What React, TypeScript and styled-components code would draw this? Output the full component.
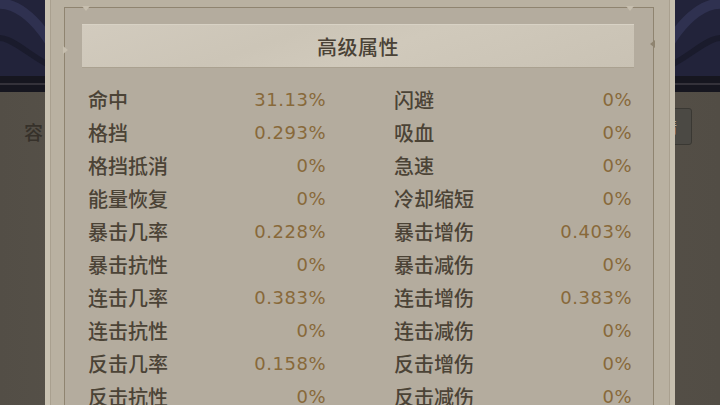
import styled, { createGlobalStyle } from "styled-components"

const GlobalStyle = createGlobalStyle`
  html, body {
    margin: 0;
    padding: 0;
    background: #1f1f2c;
    overflow: hidden;
  }
  * { box-sizing: border-box; }
`

interface Stat {
  label: string
  value: string
}

const stats: Stat[] = [
  { label: "命中", value: "31.13%" },
  { label: "闪避", value: "0%" },
  { label: "格挡", value: "0.293%" },
  { label: "吸血", value: "0%" },
  { label: "格挡抵消", value: "0%" },
  { label: "急速", value: "0%" },
  { label: "能量恢复", value: "0%" },
  { label: "冷却缩短", value: "0%" },
  { label: "暴击几率", value: "0.228%" },
  { label: "暴击增伤", value: "0.403%" },
  { label: "暴击抗性", value: "0%" },
  { label: "暴击减伤", value: "0%" },
  { label: "连击几率", value: "0.383%" },
  { label: "连击增伤", value: "0.383%" },
  { label: "连击抗性", value: "0%" },
  { label: "连击减伤", value: "0%" },
  { label: "反击几率", value: "0.158%" },
  { label: "反击增伤", value: "0%" },
  { label: "反击抗性", value: "0%" },
  { label: "反击减伤", value: "0%" },
]

const SceneTop = () => (
  <svg width="720" height="92" viewBox="0 0 720 92">
    <rect width="720" height="92" fill="#22233a" />
    <path d="M-20 10 C 10 -10, 40 20, 60 60" stroke="#2f3150" strokeWidth="10" fill="none" />
    <path d="M-10 40 C 10 30, 30 60, 60 70" stroke="#1a1b2c" strokeWidth="6" fill="none" />
    <path d="M740 10 C 710 -10, 680 20, 660 60" stroke="#2f3150" strokeWidth="10" fill="none" />
    <path d="M730 40 C 710 30, 690 60, 660 70" stroke="#1a1b2c" strokeWidth="6" fill="none" />
    <path d="M0 76 L 720 76 L 720 92 L 0 92 Z" fill="#16161f" />
    <path d="M0 84 L 720 84" stroke="#34323a" strokeWidth="2" />
  </svg>
)

export default function App() {
  return (
    <>
      <GlobalStyle />
      <Stage>
        <Scene>
          <SceneTop />
          <SceneBoard>
            <SceneLabel>容量</SceneLabel>
            <SceneButton>详情</SceneButton>
          </SceneBoard>
        </Scene>

        <Modal>
          <Frame>
            <NotchTop $side="left" />
            <NotchTop $side="right" />
            <NotchSide $side="left" />
            <NotchSide $side="right" />
            <Header>
              <Title>高级属性</Title>
            </Header>
            <StatGrid>
              {stats.map((s) => (
                <StatRow key={s.label}>
                  <Label>{s.label}</Label>
                  <Value>{s.value}</Value>
                </StatRow>
              ))}
            </StatGrid>
          </Frame>
        </Modal>
      </Stage>
    </>
  )
}

const Stage = styled.div`
  position: relative;
  width: 720px;
  height: 405px;
  overflow: hidden;
  font-family: "Noto Sans CJK SC", "Noto Sans", sans-serif;
`
const Scene = styled.div`
  display: flex;
  flex-direction: column;
  width: 720px;
  height: 405px;
  background: #22233a;
  svg {
    display: block;
  }
`
const SceneBoard = styled.div`
  flex: 1;
  display: flex;
  justify-content: space-between;
  align-items: flex-start;
  padding: 16px 28px 0 24px;
  background: linear-gradient(90deg, #534e46 0%, #5a554c 30%, #58524a 70%, #524d45 100%);
`
const SceneLabel = styled.div`
  margin-top: 10px;
  font-size: 19px;
  font-weight: 500;
  color: #36312a;
  letter-spacing: 2px;
`
const SceneButton = styled.div`
  width: 56px;
  height: 37px;
  display: flex;
  align-items: center;
  justify-content: flex-end;
  padding-right: 14px;
  border: 1px solid #3a3833;
  border-radius: 3px;
  background: #4b4944;
  color: #c9c3b6;
  font-size: 15px;
`
const Modal = styled.div`
  position: absolute;
  left: 45px;
  top: 0;
  width: 630px;
  height: 440px;
  padding: 7px 16px 0 14px;
  background: #b9b1a1;
  border-left: 5px solid #c8c1b1;
  border-right: 5px solid #c6bfaf;
  box-shadow: inset 1px 0 0 #a9a08f, inset -1px 0 0 #a9a08f;
`
const Frame = styled.div`
  position: relative;
  height: 100%;
  padding: 16px 19px 0 17px;
  background: #b4ac9e;
  border: 1.5px solid #8f8470;
  border-bottom: none;
`
const NotchTop = styled.div<{ $side: "left" | "right" }>`
  position: absolute;
  top: -2px;
  ${(p) => (p.$side === "left" ? "left: 17px;" : "right: 19px;")}
  width: 0;
  height: 0;
  border-left: 4px solid transparent;
  border-right: 4px solid transparent;
  border-top: 5px solid #c6beae;
`
const NotchSide = styled.div<{ $side: "left" | "right" }>`
  position: absolute;
  top: ${(p) => (p.$side === "left" ? "38px" : "32px")};
  ${(p) => (p.$side === "left" ? "left: -2px;" : "right: -2px;")}
  width: 0;
  height: 0;
  border-top: 4px solid transparent;
  border-bottom: 4px solid transparent;
  ${(p) =>
    p.$side === "left"
      ? "border-left: 5px solid #c6beae;"
      : "border-right: 5px solid #8f8470;"}
`
const Header = styled.div`
  height: 44px;
  display: flex;
  align-items: center;
  justify-content: center;
  background: linear-gradient(160deg, #d2cbbe 0%, #ccc5b7 35%, #d0c9bb 55%, #c9c2b4 100%);
  border-top: 1px solid #d8d2c5;
  border-bottom: 1px solid #aaa190;
`
const Title = styled.h1`
  margin: 0;
  font-size: 20px;
  font-weight: 500;
  color: #4a4236;
  letter-spacing: 0.5px;
`
const StatGrid = styled.div`
  display: grid;
  grid-template-columns: 238px 238px;
  justify-content: space-between;
  grid-auto-rows: 33px;
  padding: 15px 2px 0 6px;
`
const StatRow = styled.div`
  display: flex;
  align-items: center;
  justify-content: space-between;
`
const Label = styled.span`
  font-size: 20px;
  font-weight: 500;
  color: #4b4336;
`
const Value = styled.span`
  font-family: "DejaVu Sans", "Noto Sans", sans-serif;
  font-size: 18px;
  letter-spacing: 0.5px;
  color: #88693a;
`
